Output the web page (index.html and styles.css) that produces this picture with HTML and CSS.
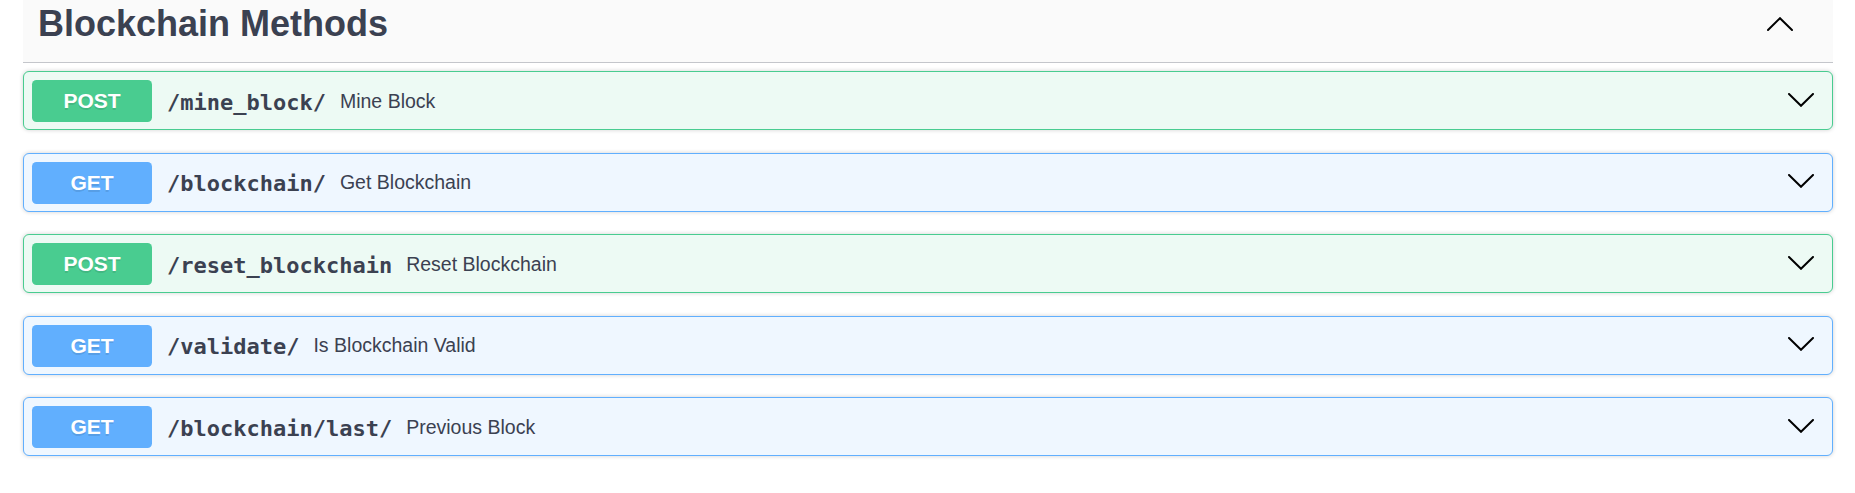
FILE: index.html
```html
<!DOCTYPE html>
<html lang="en">
<head>
<meta charset="utf-8">
<title>Blockchain Methods</title>
<link rel="stylesheet" href="styles.css">
</head>
<body>
<div class="wrapper">
  <section class="tag-section">
    <h3 class="tag">
      <span class="tag-title">Blockchain Methods</span>
      <svg class="arrow-up" width="26" height="14" viewBox="0 0 26 14" aria-hidden="true"><polyline points="1,13 13,1.2 25,13" /></svg>
    </h3>
    <div class="ops">
      <div class="opblock post">
        <div class="summary">
          <span class="method">POST</span>
          <span class="path">/mine_block/</span>
          <span class="desc">Mine Block</span>
          <svg class="arrow-down" width="26" height="14" viewBox="0 0 26 14" aria-hidden="true"><polyline points="1,1 13,12.8 25,1" /></svg>
        </div>
      </div>
      <div class="opblock get">
        <div class="summary">
          <span class="method">GET</span>
          <span class="path">/blockchain/</span>
          <span class="desc">Get Blockchain</span>
          <svg class="arrow-down" width="26" height="14" viewBox="0 0 26 14" aria-hidden="true"><polyline points="1,1 13,12.8 25,1" /></svg>
        </div>
      </div>
      <div class="opblock post">
        <div class="summary">
          <span class="method">POST</span>
          <span class="path">/reset_blockchain</span>
          <span class="desc">Reset Blockchain</span>
          <svg class="arrow-down" width="26" height="14" viewBox="0 0 26 14" aria-hidden="true"><polyline points="1,1 13,12.8 25,1" /></svg>
        </div>
      </div>
      <div class="opblock get">
        <div class="summary">
          <span class="method">GET</span>
          <span class="path">/validate/</span>
          <span class="desc">Is Blockchain Valid</span>
          <svg class="arrow-down" width="26" height="14" viewBox="0 0 26 14" aria-hidden="true"><polyline points="1,1 13,12.8 25,1" /></svg>
        </div>
      </div>
      <div class="opblock get">
        <div class="summary">
          <span class="method">GET</span>
          <span class="path">/blockchain/last/</span>
          <span class="desc">Previous Block</span>
          <svg class="arrow-down" width="26" height="14" viewBox="0 0 26 14" aria-hidden="true"><polyline points="1,1 13,12.8 25,1" /></svg>
        </div>
      </div>
    </div>
  </section>
</div>
</body>
</html>
```

FILE: styles.css
```css
* {
  box-sizing: border-box;
}

html, body {
  margin: 0;
  padding: 0;
  background: #ffffff;
}

body {
  font-family: "Liberation Sans", Arial, sans-serif;
  color: #3b4151;
}

.wrapper {
  padding: 0 22px 0 23px;
}

.tag {
  display: flex;
  align-items: flex-start;
  height: 63px;
  margin: 0 0 8px;
  padding: 3px 0 0 15px;
  background: #fafafa;
  border-bottom: 1px solid #c4c6cb;
  font-size: 36px;
  font-weight: 700;
  line-height: 42px;
  color: #3b4151;
}

.tag-title {
  flex: 1;
}

.arrow-up {
  margin: 14px 40px 0 0;
  fill: none;
  stroke: #000000;
  stroke-width: 2;
  stroke-linecap: round;
  stroke-linejoin: miter;
}

.ops {
  display: flex;
  flex-direction: column;
}

.opblock {
  margin: 0 0 22.5px;
  border: 1px solid #000;
  border-radius: 6px;
  box-shadow: 0 0 4.5px rgba(0, 0, 0, 0.19);
}

.opblock.post {
  background: #edfaf4;
  border-color: #49cc90;
}

.opblock.get {
  background: #eff7ff;
  border-color: #61affe;
}

.summary {
  display: flex;
  align-items: center;
  padding: 8px 8px 7px 8px;
}

.method {
  flex: 0 0 auto;
  width: 120px;
  height: 42px;
  border-radius: 4.5px;
  font-family: "Liberation Sans", Arial, sans-serif;
  font-size: 21px;
  font-weight: 700;
  line-height: 42px;
  text-align: center;
  color: #ffffff;
  text-shadow: 0 1.5px 0 rgba(0, 0, 0, 0.1);
}

.post .method {
  background: #49cc90;
}

.get .method {
  background: #61affe;
}

.path {
  flex: 0 0 auto;
  padding: 0 14px 0 15px;
  font-family: "DejaVu Sans Mono", "Liberation Mono", monospace;
  font-size: 22px;
  font-weight: 700;
  color: #3b4151;
  position: relative;
  top: 1px;
}

.desc {
  flex: 1;
  font-family: "Liberation Sans", Arial, sans-serif;
  font-size: 19.5px;
  color: #3b4151;
}

.arrow-down {
  flex: 0 0 auto;
  margin: 0 10px 3px 0;
  fill: none;
  stroke: #000000;
  stroke-width: 2;
  stroke-linecap: round;
  stroke-linejoin: miter;
}
```
